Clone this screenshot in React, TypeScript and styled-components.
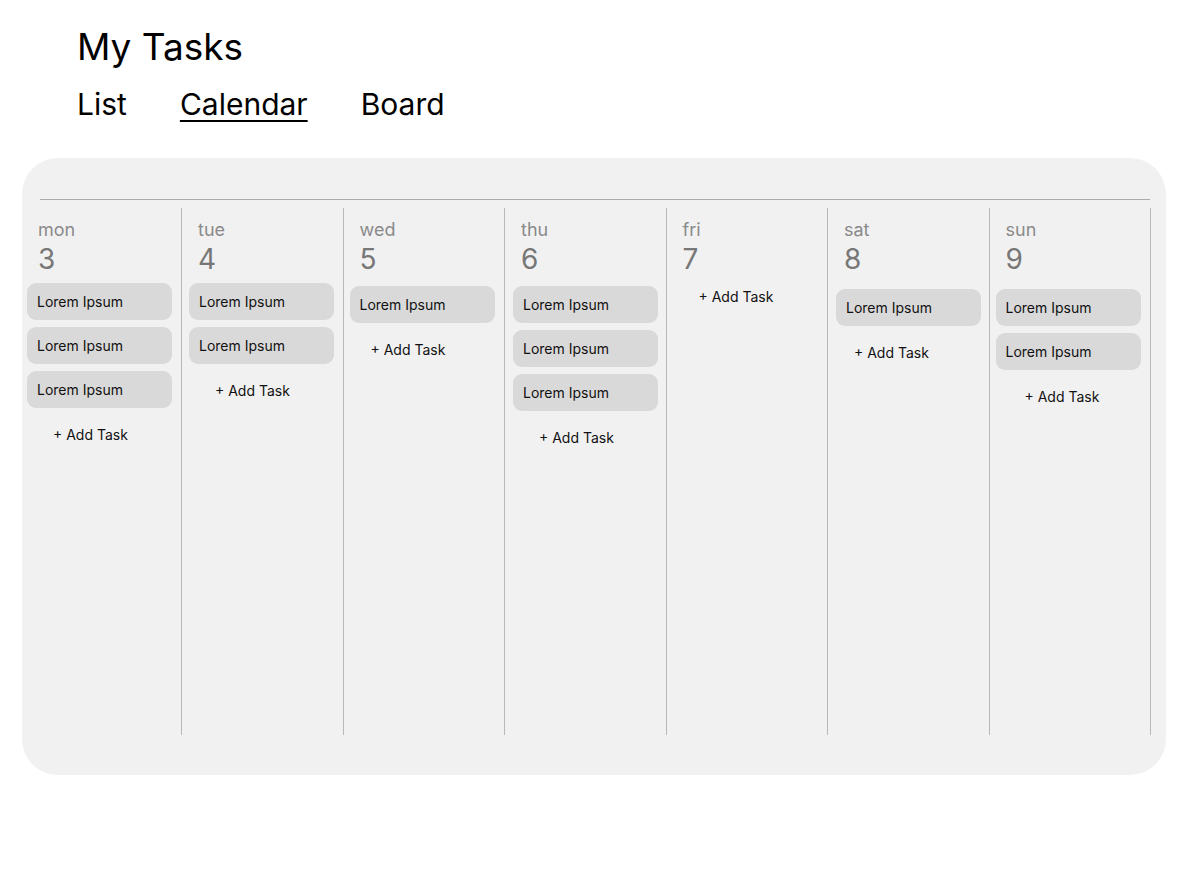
import styled, { createGlobalStyle } from "styled-components";

const GlobalStyle = createGlobalStyle`
  body {
    margin: 0;
    background: #ffffff;
    font-family: Inter, "Noto Sans", sans-serif;
    color: #000;
  }
`;

const Page = styled.div`
  width: 1190px;
  height: 886px;
  padding-top: 25px;
  box-sizing: border-box;
`;

const Header = styled.div`
  padding-left: 77px;
`;

const Title = styled.h1`
  margin: 0;
  font-size: 37px;
  font-weight: 400;
  line-height: 44px;
`;

const Tabs = styled.div`
  display: flex;
  gap: 53px;
  margin-top: 17px;
`;

const Tab = styled.span<{ $active?: boolean }>`
  font-size: 30px;
  line-height: 36px;
  text-decoration: ${(p) => (p.$active ? "underline" : "none")};
  text-decoration-thickness: 2px;
  text-underline-offset: 5px;
`;

const Panel = styled.div`
  margin: 36px 0 0 22px;
  width: 1144px;
  height: 617px;
  background: #f1f1f1;
  border-radius: 36px;
  padding-top: 41px;
  box-sizing: border-box;
`;

const TopRule = styled.div`
  margin: 0 16px 0 18px;
  height: 1px;
  background: #ababab;
`;

const Week = styled.div`
  display: grid;
  grid-template-columns: 160px repeat(6, 1fr);
  width: 1129px;
  margin-top: 8px;
`;

const Day = styled.div`
  height: 527px;
  border-right: 1px solid #b8b8b8;
  padding-top: 11px;
  box-sizing: border-box;
`;

const DayName = styled.div`
  padding-left: 16px;
  font-size: 18px;
  line-height: 22px;
  color: #8a8a8a;
`;

const DayNumber = styled.div`
  margin-top: 1px;
  padding-left: 16px;
  font-size: 28px;
  line-height: 34px;
  color: #777777;
`;

const TaskList = styled.div<{ $offset: number; $inset: number }>`
  display: flex;
  flex-direction: column;
  gap: 7px;
  margin-top: ${(p) => 7 + p.$offset}px;
  padding-left: ${(p) => p.$inset}px;
`;

const Task = styled.div`
  width: 145px;
  height: 37px;
  box-sizing: border-box;
  padding-left: 10px;
  display: flex;
  align-items: center;
  background: #d9d9d9;
  border-radius: 9px;
  font-size: 14px;
  color: #111;
`;

const AddTask = styled.div<{ $indent: number; $top: number }>`
  margin-top: ${(p) => p.$top}px;
  padding-left: ${(p) => p.$indent}px;
  font-size: 14px;
  line-height: 17px;
  color: #111;
`;

type DayData = {
  name: string;
  date: number;
  tasks: number;
  offset: number;
  inset: number;
  indent: number;
};

const days: DayData[] = [
  { name: "mon", date: 3, tasks: 3, offset: 0, inset: 5, indent: 31 },
  { name: "tue", date: 4, tasks: 2, offset: 0, inset: 7, indent: 33 },
  { name: "wed", date: 5, tasks: 1, offset: 3, inset: 6, indent: 27 },
  { name: "thu", date: 6, tasks: 3, offset: 3, inset: 8, indent: 34 },
  { name: "fri", date: 7, tasks: 0, offset: 0, inset: 6, indent: 32 },
  { name: "sat", date: 8, tasks: 1, offset: 6, inset: 8, indent: 26 },
  { name: "sun", date: 9, tasks: 2, offset: 6, inset: 6, indent: 35 },
];

export default function App() {
  return (
    <Page>
      <GlobalStyle />
      <Header>
        <Title>My Tasks</Title>
        <Tabs>
          <Tab>List</Tab>
          <Tab $active>Calendar</Tab>
          <Tab>Board</Tab>
        </Tabs>
      </Header>
      <Panel>
        <TopRule />
        <Week>
          {days.map((d) => (
            <Day key={d.name}>
              <DayName>{d.name}</DayName>
              <DayNumber>{d.date}</DayNumber>
              {d.tasks > 0 ? (
                <>
                  <TaskList $offset={d.offset} $inset={d.inset}>
                    {Array.from({ length: d.tasks }).map((_, i) => (
                      <Task key={i}>Lorem Ipsum</Task>
                    ))}
                  </TaskList>
                  <AddTask $indent={d.indent} $top={18}>+ Add Task</AddTask>
                </>
              ) : (
                <AddTask $indent={d.indent} $top={12}>+ Add Task</AddTask>
              )}
            </Day>
          ))}
        </Week>
      </Panel>
    </Page>
  );
}
